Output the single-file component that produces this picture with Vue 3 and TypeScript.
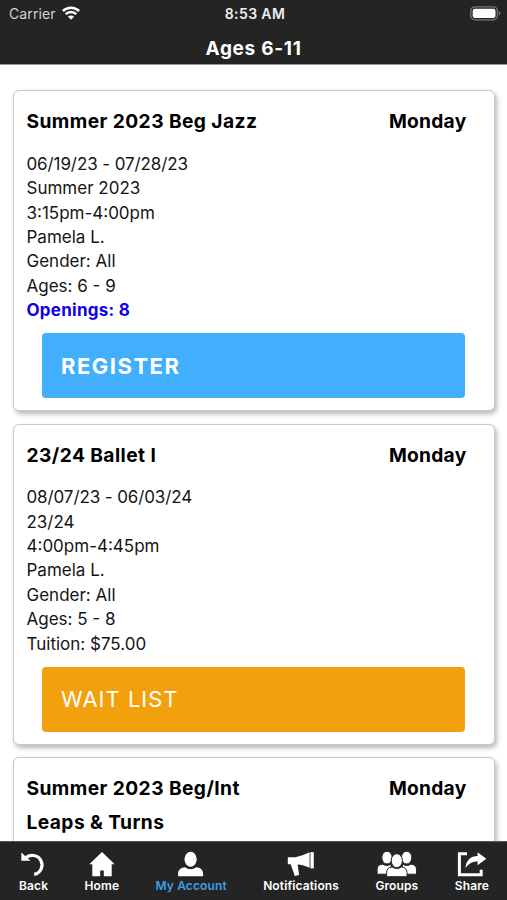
<script setup lang="ts">
interface ClassCard {
  title: string
  day: string
  lines: string[]
  openings?: string
  action: string
  kind: 'register' | 'wait'
}

const classes: ClassCard[] = [
  {
    title: 'Summer 2023 Beg Jazz',
    day: 'Monday',
    lines: ['06/19/23 - 07/28/23', 'Summer 2023', '3:15pm-4:00pm', 'Pamela L.', 'Gender: All', 'Ages: 6 - 9'],
    openings: 'Openings: 8',
    action: 'REGISTER',
    kind: 'register',
  },
  {
    title: '23/24 Ballet I',
    day: 'Monday',
    lines: ['08/07/23 - 06/03/24', '23/24', '4:00pm-4:45pm', 'Pamela L.', 'Gender: All', 'Ages: 5 - 8', 'Tuition: $75.00'],
    action: 'WAIT LIST',
    kind: 'wait',
  },
  {
    title: 'Summer 2023 Beg/Int Leaps & Turns',
    day: 'Monday',
    lines: [],
    action: '',
    kind: 'register',
  },
]
</script>

<template>
  <div class="screen">
    <header class="top">
      <div class="status">
        <div class="carrier">
          <span>Carrier</span>
          <svg class="wifi" viewBox="0 0 18 14" width="18" height="14">
            <path d="M.9 5C5.4.5 12.6.5 17.1 5" />
            <path d="M3.7 8.2c3-2.9 7.6-2.9 10.6 0" />
            <path class="dot" d="M5.9 10.6c1.8-1.6 4.4-1.6 6.2 0L9 13.7z" />
          </svg>
        </div>
        <span class="time">8:53 AM</span>
        <svg class="battery" viewBox="0 0 31 15" width="31" height="15">
          <rect x=".8" y=".8" width="26.6" height="13" rx="4" fill="none" stroke="#777" stroke-width="1.3" />
          <rect x="2.7" y="2.7" width="22.8" height="9.2" rx="2.2" fill="#fff" />
          <path d="M28.8 5c2 .7 2 3.9 0 4.6z" fill="#777" />
        </svg>
      </div>
      <h1>Ages 6-11</h1>
    </header>

    <main class="list">
      <article v-for="item in classes" :key="item.title" class="card">
        <div class="heading">
          <h2>{{ item.title }}</h2>
          <h2 class="day">{{ item.day }}</h2>
        </div>
        <div v-if="item.lines.length" class="details">
          <div v-for="(line, index) in item.lines" :key="line" :class="{ dates: index === 0 }">{{ line }}</div>
          <div v-if="item.openings" class="openings">{{ item.openings }}</div>
        </div>
        <button v-if="item.action" class="action" :class="item.kind">{{ item.action }}</button>
      </article>
    </main>

    <nav class="tabs">
      <a class="tab back">
        <svg viewBox="0 0 26 26" width="26" height="26">
          <path d="M4.6 7.2A9.6 9.6 0 1 1 13.2 23.4" fill="none" stroke="currentColor" stroke-width="3.2" />
          <path d="M.3 1.6v8.1h9.2z" />
        </svg>
        <span>Back</span>
      </a>
      <a class="tab home">
        <svg viewBox="0 0 26 26" width="26" height="26">
          <path d="M13 1 .3 13.3h3v12h7.9v-5.8h3.6v5.8h7.9v-12h3z" />
        </svg>
        <span>Home</span>
      </a>
      <a class="tab account active">
        <svg viewBox="0 0 26 26" width="26" height="26">
          <ellipse cx="12.6" cy="8.2" rx="6.1" ry="7.5" />
          <path d="M.1 25.3v-2.5c0-4.2 3.2-6.3 7-6.5 3 2.6 8 2.6 11 0 3.8.2 7 2.3 7 6.5v2.5z" />
        </svg>
        <span>My Account</span>
      </a>
      <a class="tab notes">
        <svg viewBox="0 0 28 26" width="28" height="26">
          <path d="M.8 6.2H8.4C13.1 5.2 18 3.5 22.6 1.2v15.6c-4.4-2-8-3-12-3.3l1.5 10.6-4.3 1L3.7 13.2H.8z" />
          <path d="M23.4 1.2h3.4v16.2h-3.4z" />
        </svg>
        <span>Notifications</span>
      </a>
      <a class="tab groups">
        <svg viewBox="0 0 40 26" width="40" height="26">
          <g class="person">
            <ellipse cx="10" cy="6.6" rx="5.2" ry="6.4" />
            <path d="M.1 23.2v-4.7c0-3.6 2.2-5.2 5.7-5.3 2.2 1.6 5.8 1.6 8 0l2 10z" />
            <ellipse cx="29.6" cy="6.6" rx="5.2" ry="6.4" />
            <path d="M39.5 23.2v-4.7c0-3.6-2.2-5.2-5.7-5.3-2.2 1.6-5.8 1.6-8 0l-2 10z" />
            <path d="M9.6 25.7v-4c0-3.8 2.4-5.6 5.6-5.8 2.5 2 6.7 2 9.2 0 3.2.2 5.6 2 5.6 5.8v4z" />
            <ellipse cx="19.8" cy="9.7" rx="5.6" ry="7" />
          </g>
        </svg>
        <span>Groups</span>
      </a>
      <a class="tab share">
        <svg viewBox="0 0 30 26" width="30" height="26">
          <path d="M10 2.7H2.4v21h21.8v-5" fill="none" stroke="currentColor" stroke-width="3" />
          <path d="M8.4 17C9.4 9.2 13.5 5.1 20.6 5.1V1.2l8.7 6.6-8.7 6.5v-3.8c-5.2 0-8.6 2-12.2 6.5z" />
        </svg>
        <span>Share</span>
      </a>
    </nav>
  </div>
</template>

<style>
body {
  margin: 0;
  background: #fff;
}
</style>

<style scoped>
.screen {
  display: flex;
  flex-direction: column;
  width: 507px;
  height: 900px;
  overflow: hidden;
  background: #fff;
  color: #000;
  font-family: Inter, "Liberation Sans", sans-serif;
}

.top {
  flex: none;
  height: 65px;
  box-sizing: border-box;
  background: #242424;
  border-bottom: 1px solid #999;
  color: #fff;
}

.status {
  display: grid;
  grid-template-columns: 1fr auto 1fr;
  align-items: center;
  height: 27px;
  padding: 0 6px 0 9px;
}

.carrier {
  display: flex;
  align-items: center;
  gap: 6px;
  color: #d4d4d4;
  font-size: 14px;
  letter-spacing: 0.1px;
}

.wifi {
  position: relative;
  top: -1px;
  fill: none;
  stroke: #fff;
  stroke-width: 2.5;
}

.wifi .dot {
  fill: #fff;
  stroke: none;
}

.time {
  color: #eee;
  font-size: 14px;
  font-weight: 600;
  letter-spacing: 0.4px;
}

.battery {
  justify-self: end;
}

h1 {
  margin: 10px 0 0;
  font-size: 19px;
  line-height: 24px;
  font-weight: 700;
  letter-spacing: 0.7px;
  text-align: center;
}

.list {
  flex: 1;
  min-height: 0;
  overflow: hidden;
  display: flex;
  flex-direction: column;
  gap: 12.5px;
  padding: 25px 12px 0 13px;
}

.card {
  flex: none;
  height: 321px;
  box-sizing: border-box;
  padding: 13px 27.5px 0 12.5px;
  border: 1.5px solid #c9c9c9;
  border-radius: 6px;
  background: #fff;
  box-shadow: 2px 3px 5px rgba(0, 0, 0, 0.28);
}

.heading {
  display: flex;
  justify-content: space-between;
  align-items: flex-start;
}

h2 {
  margin: 0;
  max-width: 250px;
  font-size: 19.2px;
  line-height: 34px;
  font-weight: 700;
  letter-spacing: 0.42px;
}

.day {
  letter-spacing: 0.25px;
}

.details {
  margin-top: 13.6px;
  font-size: 17px;
  line-height: 24.45px;
  color: #151515;
}

.dates {
  letter-spacing: -0.1px;
}

.openings {
  color: #0f00e6;
  font-weight: 700;
  letter-spacing: 0.25px;
}

.action {
  display: block;
  width: 423px;
  height: 65px;
  margin: 10.4px 0 0 15.5px;
  padding: 0 19px;
  border: 0;
  border-radius: 4px;
  color: #fff;
  font-family: inherit;
  font-size: 22px;
  text-align: left;
}

.register {
  background: #41affb;
  font-weight: 700;
  letter-spacing: 1.5px;
}

.wait {
  background: #f3a00d;
  font-weight: 400;
  letter-spacing: 1px;
}

.tabs {
  flex: none;
  display: flex;
  justify-content: space-between;
  height: 59px;
  box-sizing: border-box;
  padding: 9px 18px 0 19px;
  background: #242424;
  border-top: 1px solid #555;
}

.tab {
  display: flex;
  flex-direction: column;
  align-items: center;
  color: #fff;
  font-size: 12px;
  line-height: 16px;
  font-weight: 600;
  letter-spacing: 0.12px;
}

.tab svg {
  fill: currentColor;
  color: #fff;
}

.tab span {
  margin-top: 1px;
}

.active {
  color: #3c9fe5;
}

.person {
  stroke: #242424;
  stroke-width: 1;
}
</style>
